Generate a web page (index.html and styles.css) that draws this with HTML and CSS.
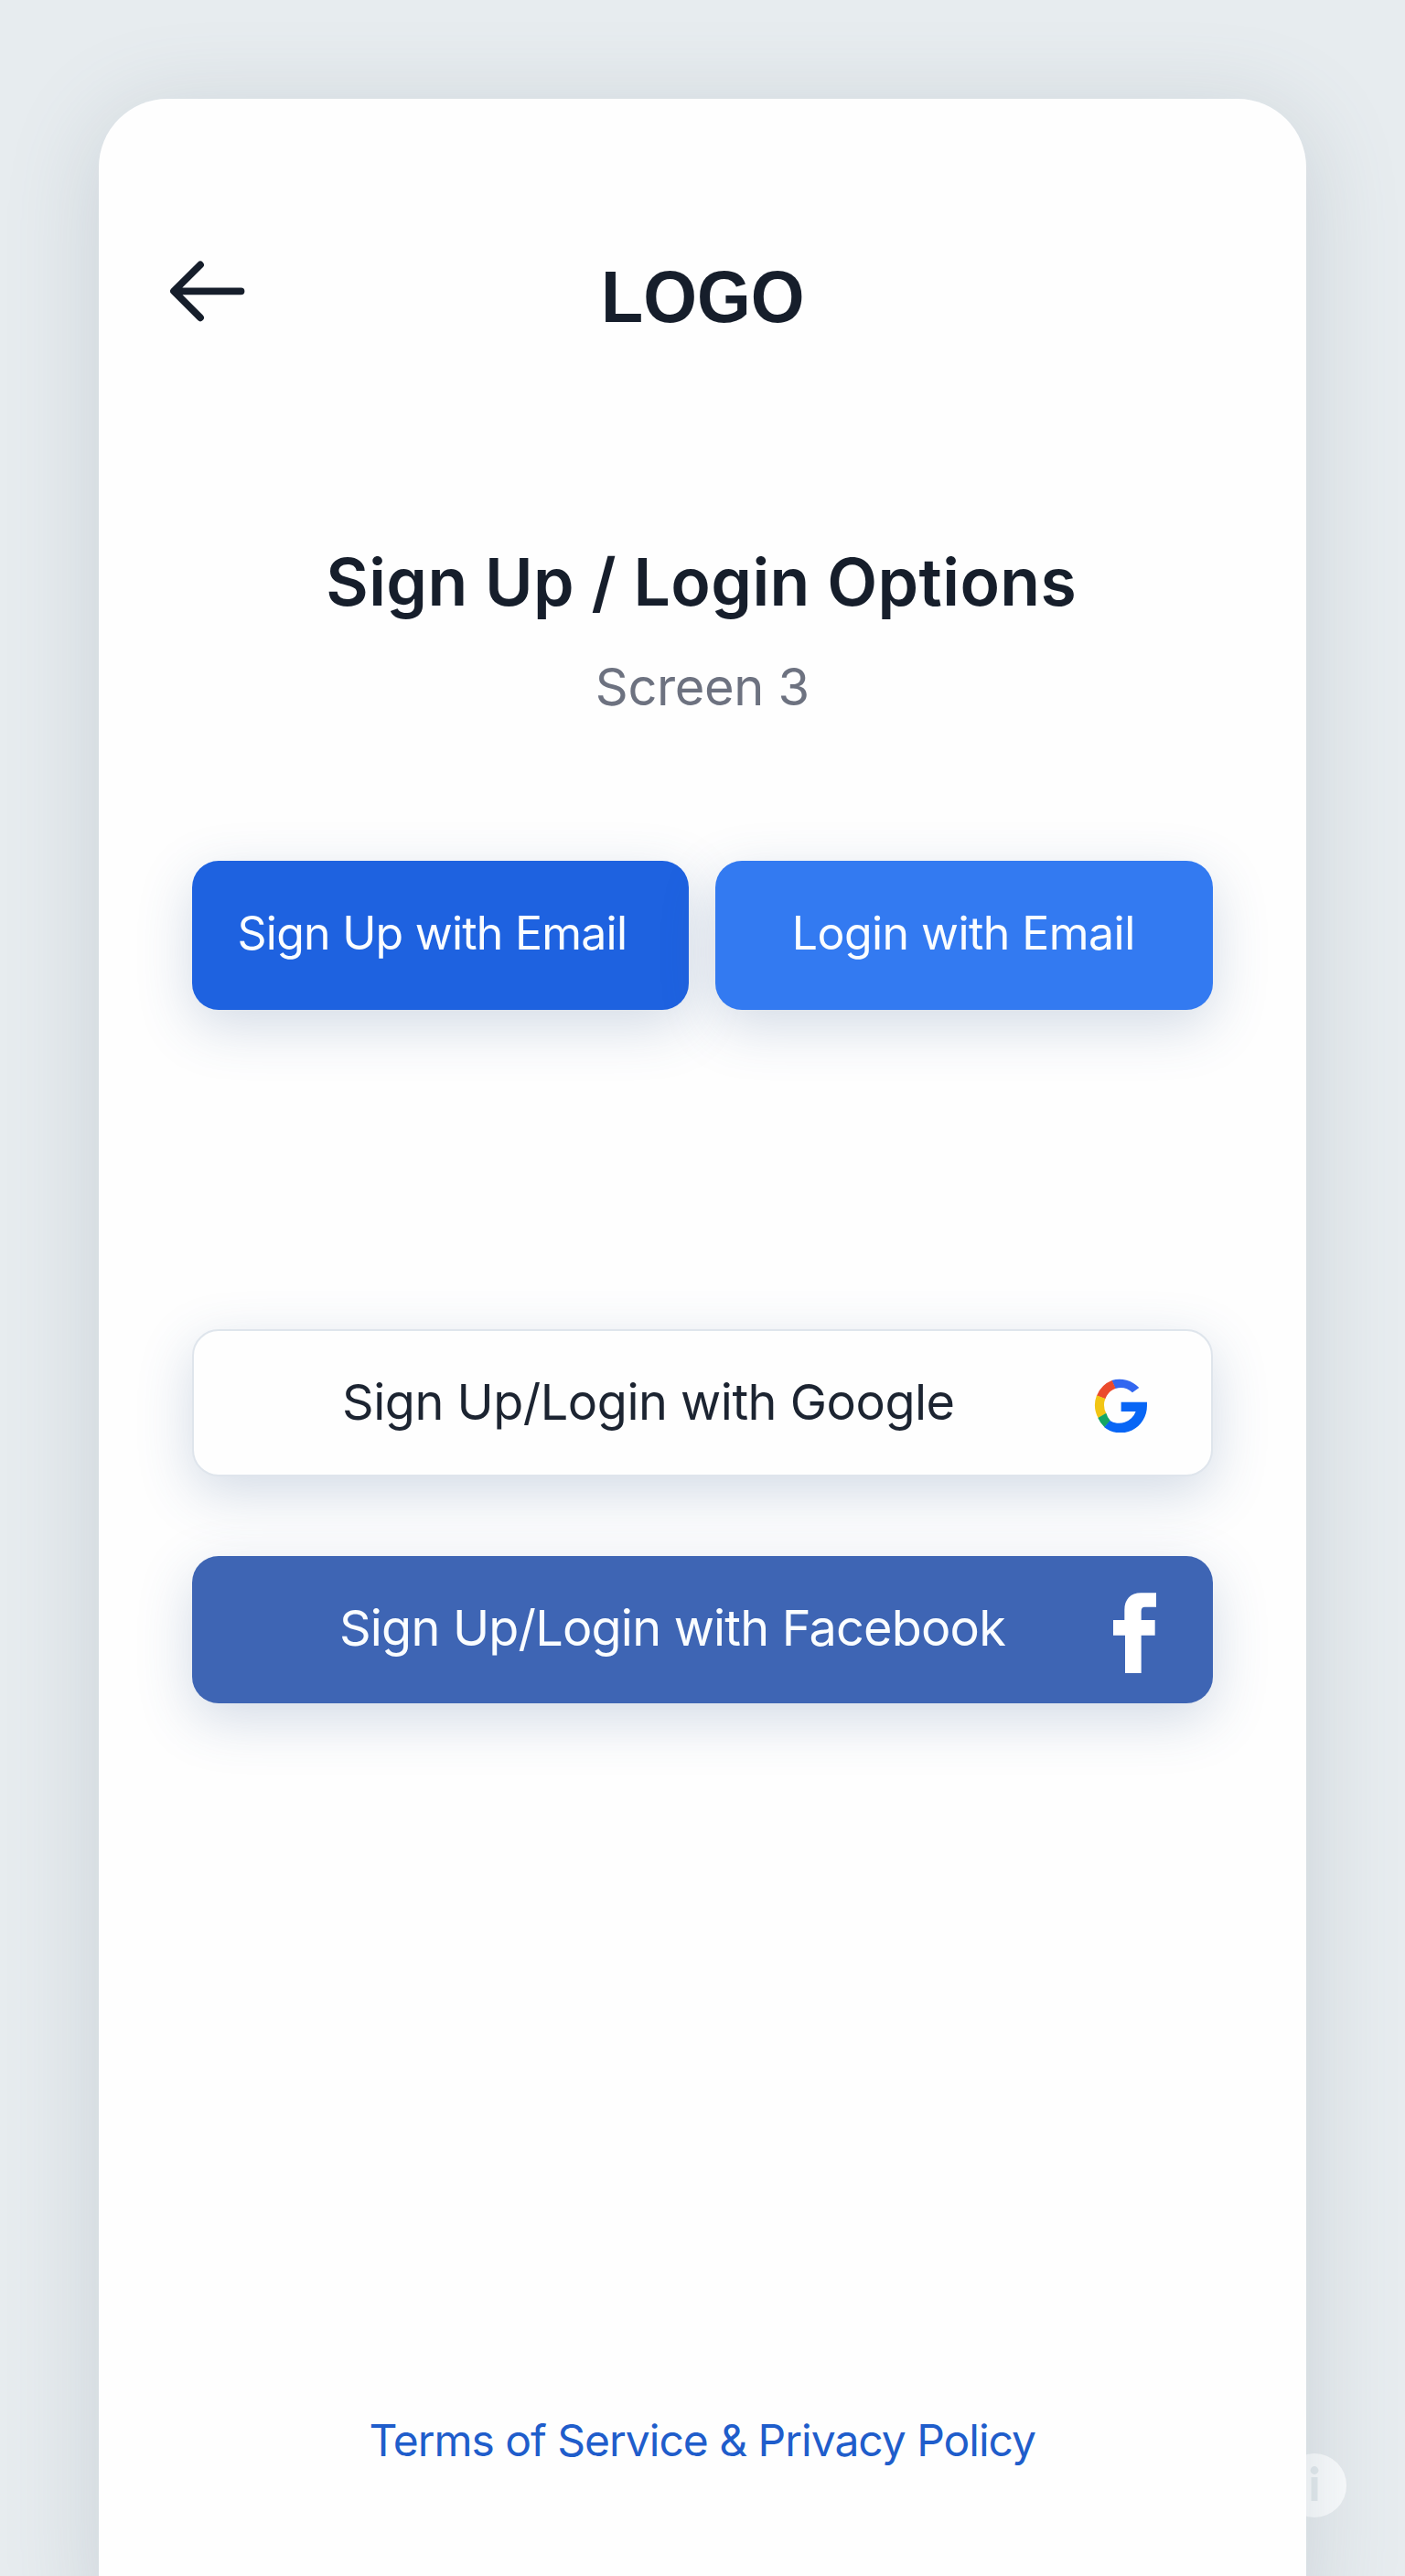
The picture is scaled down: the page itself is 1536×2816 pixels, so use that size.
FILE: index.html
```html
<!DOCTYPE html>
<html lang="en">
<head>
<meta charset="utf-8">
<title>Sign Up / Login Options</title>
<link rel="stylesheet" href="styles.css">
</head>
<body>
<div class="stage">
  <button class="info" aria-label="Info">
    <svg viewBox="0 0 70 70"><circle cx="35" cy="18.5" r="4.4"/><path d="M31.5 26h7v26h-7z"/></svg>
  </button>
  <main class="card">
    <header class="header">
      <a class="back" href="#" aria-label="Back">
        <svg viewBox="0 0 84 68"><path d="M78.5 33.3H7M34 4.5L5 33.3L34 62.3"/></svg>
      </a>
      <div class="logo">LOGO</div>
    </header>
    <h1 class="title">Sign Up / Login Options</h1>
    <p class="subtitle">Screen 3</p>
    <div class="email-row">
      <button class="btn signup">Sign Up with Email</button>
      <button class="btn login">Login with Email</button>
    </div>
    <div class="social">
      <button class="btn google">
        <span>Sign Up/Login with Google</span>
        <svg class="google-icon" viewBox="471 231 175 178">
          <path fill="#0866f5" d="M560 308H645V320A87 89 0 0 1 504 390L522 368A58 59 0 0 0 608 339H560Z"/>
          <path fill="#3367f0" d="M529 237A88 89 0 0 1 619 261L597 277A58 58 0 0 0 541 264Z"/>
          <path fill="#eb4a2c" d="M480 287A88 89 0 0 1 530 237L542 263A58 58 0 0 0 508 298Z"/>
          <path fill="#f2c514" d="M485 361A88 89 0 0 1 480 286L508 297A58 58 0 0 0 511 345Z"/>
          <path fill="#13a664" d="M505 390A88 89 0 0 1 484 360L511 344A58 58 0 0 0 524 368Z"/>
        </svg>
      </button>
      <button class="btn facebook">
        <span>Sign Up/Login with Facebook</span>
        <svg class="facebook-icon" viewBox="351 183 141 264"><path fill="#fff" d="M390 447V323H351V273H388V240C388 205 408 184 442 184H492V230H455Q443 230 443 243V273H488V323H443V447Z"/></svg>
      </button>
    </div>
    <a class="terms" href="#">Terms of Service &amp; Privacy Policy</a>
  </main>
</div>
</body>
</html>
```
FILE: styles.css
```css
* { box-sizing: border-box; }
body {
  margin: 0;
  font-family: Inter, "Liberation Sans", sans-serif;
  color: #161e2b;
}
.stage {
  position: relative;
  height: 2816px;
  padding: 107.5px 108px 0;
  overflow: hidden;
  background: #e7ecef;
}
.card {
  position: relative;
  display: flex;
  flex-direction: column;
  height: 2780px;
  padding: 0 102px 0 101.5px;
  border-radius: 75px;
  background: #fefefe;
  box-shadow: 0 16px 100px rgba(95, 115, 130, .22);
}
.header {
  display: grid;
  grid-template-columns: 84px 1fr 84px;
  align-items: center;
  height: 120px;
  margin: 157px -25px 0;
}
.back {
  display: flex;
  margin-top: -12px;
}
.back svg {
  width: 84px;
  height: 68px;
  fill: none;
  stroke: #161e2b;
  stroke-width: 7.8;
  stroke-linecap: round;
  stroke-linejoin: round;
}
.logo {
  font: 700 80px/120px "Liberation Sans", sans-serif;
  text-align: center;
  transform: scaleX(.944);
}
.title {
  margin: 201px 2px 0 0;
  font-size: 71.5px;
  font-weight: 600;
  line-height: 100px;
  letter-spacing: .42px;
  text-align: center;
}
.subtitle {
  margin: 25px 0 0;
  font-size: 56px;
  line-height: 80px;
  letter-spacing: -.37px;
  text-align: center;
  color: #6d7280;
}
.email-row {
  display: grid;
  grid-template-columns: 1fr 1fr;
  gap: 29px;
  margin-top: 150px;
}
.btn {
  display: flex;
  align-items: center;
  justify-content: space-between;
  height: 163px;
  padding: 0;
  border: 0;
  border-radius: 29px;
  font: 400 50px/60px Inter, sans-serif;
  letter-spacing: -.76px;
  white-space: nowrap;
  color: #fafdff;
  box-shadow: 0 18px 60px rgba(60, 95, 145, .22);
}
.signup {
  padding: 0 0 5px 50px;
  background: #1e62e0;
}
.login {
  padding: 0 0 5px 83.5px;
  background: #337af1;
  letter-spacing: -.55px;
}
.social {
  display: grid;
  gap: 87.5px;
  margin-top: 349px;
}
.social .btn {
  height: 160.5px;
  font-size: 54px;
}
.social .google {
  height: 161px;
  padding: 0 69.5px 0 162.5px;
  border: 2px solid #dfe5ec;
  background: #fefefe;
  color: #1c2431;
  letter-spacing: -.48px;
}
.google-icon {
  width: 58.3px;
  height: 59.3px;
  margin-top: 7px;
}
.social .facebook {
  padding: 0 62px 0 161.5px;
  background: #3e65b4;
  letter-spacing: -.8px;
}
.facebook span { padding-bottom: 2px; }
.facebook-icon {
  width: 47px;
  height: 88px;
  margin-top: 7px;
}
.terms {
  margin-top: 771px;
  font-size: 48px;
  line-height: 70px;
  letter-spacing: -1.02px;
  text-align: center;
  text-decoration: none;
  color: #1f5dcb;
}
.info {
  position: absolute;
  left: 1402px;
  top: 2682px;
  z-index: 0;
  width: 70px;
  height: 70px;
  padding: 0;
  border: 0;
  border-radius: 50%;
  background: #fafcfd;
}
.info svg {
  display: block;
  fill: #e4ebee;
}
```
